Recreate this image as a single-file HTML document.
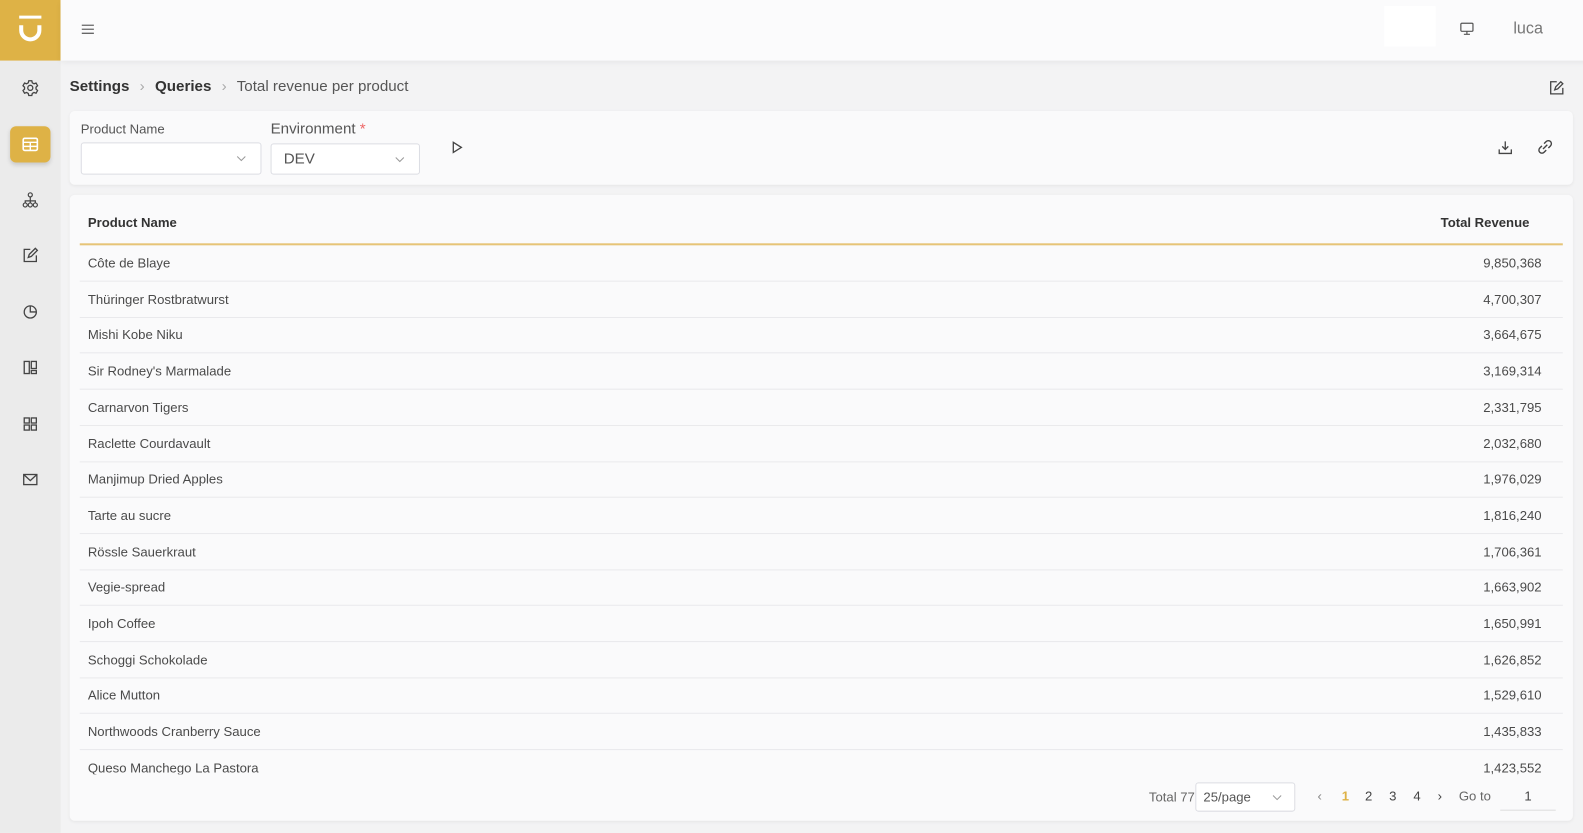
<!DOCTYPE html>
<html><head><meta charset="utf-8"><style>
*{box-sizing:border-box;margin:0;padding:0}
html,body{width:1583px;height:825px;overflow:hidden;background:#f3f3f4}
#w{position:absolute;left:0;top:0;width:1568px;height:817px;transform:scale(1.00957);transform-origin:0 0;font-family:"Liberation Sans",sans-serif;color:#444}
.side{position:absolute;left:0;top:0;width:60px;height:825px;background:#ebebeb}
.logo{position:absolute;left:0;top:0;width:60px;height:60px;background:#deb246}
.hdr{position:absolute;left:60px;top:0;width:1520px;height:60px;background:#fbfbfc;box-shadow:0 2px 6px rgba(0,0,0,.06)}
.ic{position:absolute;left:20px;width:20px;height:20px}
.active{position:absolute;left:10px;top:125px;width:40px;height:36px;background:#deb246;border-radius:6px;box-shadow:0 2px 4px rgba(0,0,0,.15)}
.card{position:absolute;background:#fafafb;border-radius:5px;box-shadow:0 1px 3px rgba(0,0,0,.06)}
.lbl{position:absolute;font-size:14px;color:#555}
.sel{position:absolute;height:32px;border:1px solid #dcdde3;border-radius:3px;background:#fff}
.row{position:absolute;left:79px;width:1469px;height:36px;border-bottom:1px solid #e9e9ec;font-size:13px;color:#4a4a4a}
.row span{position:absolute;left:8px;top:10px}
.row b{position:absolute;right:21px;top:10px;font-weight:normal}
</style></head><body><div id="w">
<div class="side"></div>
<div class="logo"><svg width="60" height="60"><path d="M19 17h22" stroke="#fff" stroke-width="3"/><path d="M21 25v5a9 9 0 0 0 18 0v-5" stroke="#fff" stroke-width="4" fill="none"/></svg></div>
<div class="hdr">
<svg style="position:absolute;left:20px;top:23px" width="14" height="12"><path d="M1 2h12M1 6h12M1 10h12" stroke="#666" stroke-width="1.3"/></svg>
<div style="position:absolute;left:1311px;top:6px;width:51px;height:40px;background:#fff"></div>
<svg style="position:absolute;left:1386px;top:22px" width="14" height="13"><rect x="1" y="1" width="12" height="8" rx="1" stroke="#555" fill="none" stroke-width="1.2"/><path d="M7 9v3M4 12h6" stroke="#555" stroke-width="1.2"/></svg>
<div style="position:absolute;left:1439px;top:20px;font-size:16px;color:#777">luca</div>
</div>
<svg class="ic" style="top:77px" viewBox="0 0 20 20" fill="none" stroke="#444" stroke-width="1.3"><circle cx="10" cy="10" r="2.5"/><path d="M8.5 3h3l.5 2 1.7 1 2-.7 1.5 2.6-1.5 1.4v2l1.5 1.4-1.5 2.6-2-.7-1.7 1-.5 2h-3l-.5-2-1.7-1-2 .7-1.5-2.6 1.5-1.4v-2L2.8 7.9l1.5-2.6 2 .7 1.7-1z"/></svg>
<div class="active"></div>
<svg class="ic" style="top:133px" viewBox="0 0 20 20"><rect x="3" y="4" width="14" height="12" rx="1.5" stroke="#fff" fill="none" stroke-width="1.6"/><path d="M3 8h14M3 12h14M10 8v8" stroke="#fff" stroke-width="1.4"/></svg>
<svg class="ic" style="top:188px" viewBox="0 0 20 20" fill="none" stroke="#444" stroke-width="1.2"><circle cx="10" cy="5" r="2"/><circle cx="5" cy="15" r="2"/><circle cx="10" cy="15" r="2"/><circle cx="15" cy="15" r="2"/><path d="M10 7v6M5 13l0-2h10v2"/></svg>
<svg class="ic" style="top:243px" viewBox="0 0 20 20" fill="none" stroke="#444" stroke-width="1.3"><path d="M10 4H4v12h12v-6"/><path d="M8 12l1-3 6-6 2 2-6 6z"/></svg>
<svg class="ic" style="top:299px" viewBox="0 0 20 20" fill="none" stroke="#444" stroke-width="1.3"><circle cx="10" cy="10" r="6"/><path d="M10 4v6h6"/></svg>
<svg class="ic" style="top:354px" viewBox="0 0 20 20" fill="none" stroke="#444" stroke-width="1.3"><rect x="4" y="4" width="5" height="12"/><rect x="11" y="4" width="5" height="7"/><rect x="11" y="13" width="5" height="3"/></svg>
<svg class="ic" style="top:410px" viewBox="0 0 20 20" fill="none" stroke="#444" stroke-width="1.3"><rect x="4" y="4" width="5" height="5"/><rect x="11" y="4" width="5" height="5"/><rect x="4" y="11" width="5" height="5"/><rect x="11" y="11" width="5" height="5"/></svg>
<svg class="ic" style="top:465px" viewBox="0 0 20 20" fill="none" stroke="#444" stroke-width="1.3"><rect x="3.5" y="5" width="13" height="10"/><path d="M3.5 5l6.5 6 6.5-6"/></svg>

<div style="position:absolute;left:69px;top:77px;font-size:15px;color:#333"><b>Settings</b> <span style="color:#aaa;margin:0 6px">›</span> <b>Queries</b> <span style="color:#aaa;margin:0 6px">›</span> <span style="color:#555">Total revenue per product</span></div>
<svg style="position:absolute;left:1534px;top:79px" width="16" height="16" fill="none" stroke="#444" stroke-width="1.3"><path d="M8 2H2v12h12V8"/><path d="M6 10l1-3 5-5 2 2-5 5z"/></svg>

<div class="card" style="left:69px;top:110px;width:1489px;height:73px"></div>
<div class="lbl" style="left:80px;top:120px;font-size:13px">Product Name</div>
<div class="sel" style="left:80px;top:141px;width:179px"><svg style="position:absolute;right:14px;top:12px" width="10" height="6"><path d="M1 1l4 4 4-4" stroke="#999" fill="none"/></svg></div>
<div class="lbl" style="left:268px;top:119px;font-size:15px">Environment <span style="color:#e66">*</span></div>
<div class="sel" style="left:268px;top:142px;width:148px;height:31px"><span style="position:absolute;left:12px;top:6px;font-size:15px;color:#555">DEV</span><svg style="position:absolute;right:14px;top:12px" width="10" height="6"><path d="M1 1l4 4 4-4" stroke="#999" fill="none"/></svg></div>
<svg style="position:absolute;left:447px;top:139px" width="12" height="14"><path d="M2 2l8 5-8 5z" stroke="#444" fill="none" stroke-width="1.3"/></svg>
<svg style="position:absolute;left:1483px;top:138px" width="16" height="16" fill="none" stroke="#444" stroke-width="1.3"><path d="M8 2v8M5 7l3 3 3-3M2 10v4h12v-4"/></svg>
<svg style="position:absolute;left:1522px;top:137px" width="17" height="17" viewBox="0 0 16 16" fill="none" stroke="#444" stroke-width="1.3"><path d="M6 10l4-4M7 5l2-2a2.8 2.8 0 0 1 4 4l-2 2M9 11l-2 2a2.8 2.8 0 0 1-4-4l2-2"/></svg>

<div class="card" style="left:69px;top:193px;width:1489px;height:620px"></div>
<div style="position:absolute;left:87px;top:213px;font-size:13px;font-weight:bold;color:#333">Product Name</div>
<div style="position:absolute;left:1427px;top:213px;font-size:13px;font-weight:bold;color:#333">Total Revenue</div>
<div style="position:absolute;left:79px;top:241px;width:1469px;height:2px;background:#e6c477"></div>
<div style="position:absolute;left:0;top:243px;width:1583px;height:524px;overflow:hidden">
<div class="row" style="top:0"><span>Côte de Blaye</span><b>9,850,368</b></div>
<div class="row" style="top:35.7px"><span>Thüringer Rostbratwurst</span><b>4,700,307</b></div>
<div class="row" style="top:71.4px"><span>Mishi Kobe Niku</span><b>3,664,675</b></div>
<div class="row" style="top:107.1px"><span>Sir Rodney's Marmalade</span><b>3,169,314</b></div>
<div class="row" style="top:142.8px"><span>Carnarvon Tigers</span><b>2,331,795</b></div>
<div class="row" style="top:178.5px"><span>Raclette Courdavault</span><b>2,032,680</b></div>
<div class="row" style="top:214.2px"><span>Manjimup Dried Apples</span><b>1,976,029</b></div>
<div class="row" style="top:249.9px"><span>Tarte au sucre</span><b>1,816,240</b></div>
<div class="row" style="top:285.6px"><span>Rössle Sauerkraut</span><b>1,706,361</b></div>
<div class="row" style="top:321.3px"><span>Vegie-spread</span><b>1,663,902</b></div>
<div class="row" style="top:357px"><span>Ipoh Coffee</span><b>1,650,991</b></div>
<div class="row" style="top:392.7px"><span>Schoggi Schokolade</span><b>1,626,852</b></div>
<div class="row" style="top:428.4px"><span>Alice Mutton</span><b>1,529,610</b></div>
<div class="row" style="top:464.1px"><span>Northwoods Cranberry Sauce</span><b>1,435,833</b></div>
<div class="row" style="top:499.8px"><span>Queso Manchego La Pastora</span><b>1,423,552</b></div>
</div>
<div style="position:absolute;left:1138px;top:782px;font-size:13px;color:#666">Total 77</div>
<div class="sel" style="left:1184px;top:775px;width:99px;height:29px"><span style="position:absolute;left:7px;top:6px;font-size:13px;color:#555">25/page</span><svg style="position:absolute;right:12px;top:11px" width="10" height="6"><path d="M1 1l4 4 4-4" stroke="#999" fill="none"/></svg></div>
<div style="position:absolute;left:1305px;top:781px;font-size:13px;color:#444">
<span style="color:#888">‹</span><span style="position:absolute;left:24px;color:#deb246;font-weight:bold">1</span><span style="position:absolute;left:47px">2</span><span style="position:absolute;left:71px">3</span><span style="position:absolute;left:95px">4</span><span style="position:absolute;left:119px">›</span><span style="position:absolute;left:140px;white-space:nowrap;color:#666">Go to</span></div>
<div style="position:absolute;left:1486px;top:774px;width:55px;height:29px;border-bottom:1px solid #ddd;text-align:center;font-size:13px;padding-top:7px">1</div>
</div></body></html>
